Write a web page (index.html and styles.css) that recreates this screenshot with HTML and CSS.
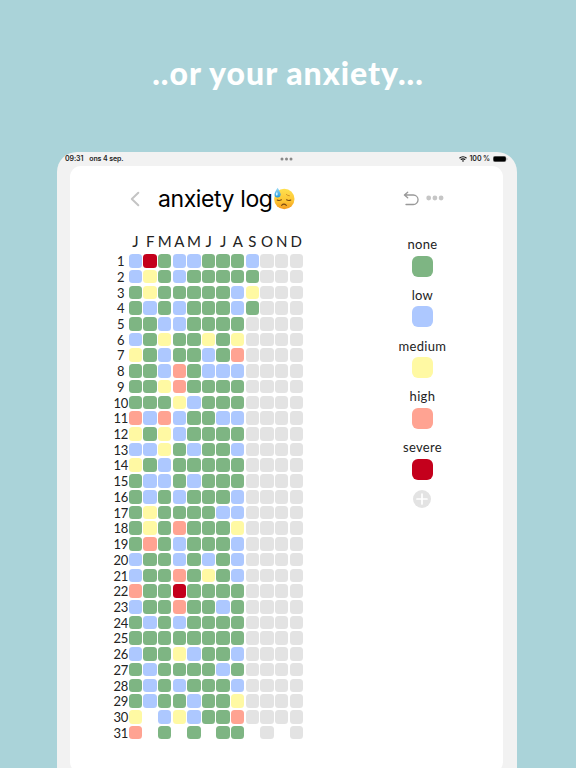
FILE: index.html
```html
<!DOCTYPE html>
<html lang="en">

<head>
  <meta charset="UTF-8" />
  <meta name="viewport" content="width=device-width, initial-scale=1.0" />
  <title>Anxiety log</title>
  <link rel="stylesheet" href="styles.css">
</head>

<body>
  <h1 class="headline">..or your anxiety...</h1>

  <div class="tablet">
    <div class="status">
      <div class="status-left"><span class="time">09:31</span><span class="date">ons 4 sep.</span></div>
      <svg class="status-dots" width="13" height="4" viewBox="0 0 13 4">
        <circle cx="2" cy="2" r="1.5" /><circle cx="6.5" cy="2" r="1.5" /><circle cx="11" cy="2" r="1.5" />
      </svg>
      <div class="status-right">
        <svg width="8" height="6" viewBox="0 0 8 6" fill="none" stroke="#111" stroke-width="1.2">
          <path d="M.5 2.2a5 5 0 0 1 7 0M1.8 3.7a3.1 3.1 0 0 1 4.4 0" />
          <path d="M2.9 4.7a1.6 1.6 0 0 1 2.2 0L4 5.9z" fill="#111" stroke="none" />
        </svg>
        <span class="percent">100 %</span>
        <svg width="15" height="6" viewBox="0 0 15 6">
          <rect x=".2" y=".2" width="12.8" height="5.6" rx="1.7" fill="#000" stroke="#888" stroke-width=".4" />
          <path d="M13.7 2v2q.8-.3.8-1t-.8-1z" fill="#888" />
        </svg>
      </div>
    </div>

    <div class="screen">
      <div class="topbar">
        <svg class="back" width="10" height="16" viewBox="0 0 10 16">
          <path d="M8.3 1.8 1.8 8l6.500 6.200" />
        </svg>
        <h2 class="title">anxiety log</h2>
        <svg class="emoji" width="22" height="23" viewBox="0 0 22 23">
          <defs>
            <linearGradient id="face" x1="0" y1="0" x2="0" y2="1">
              <stop offset="0" stop-color="#ffe04f" />
              <stop offset=".6" stop-color="#fdc533" />
              <stop offset="1" stop-color="#f39a20" />
            </linearGradient>
            <linearGradient id="drop" x1="0" y1="0" x2="0" y2="1">
              <stop offset="0" stop-color="#9fdcf6" />
              <stop offset="1" stop-color="#1f9be0" />
            </linearGradient>
          </defs>
          <circle cx="11.300" cy="12" r="10.200" fill="url(#face)" />
          <path d="M4.200 13q2 1 4.200-.2M13.600 12.800q2 1.200 4.200.2M8.600 18.300q2.200-2.200 4.800 0" fill="none" stroke="#7a4a12" stroke-width="1.100" stroke-linecap="round" />
          <path d="M4.700 8.600q1.700-.1 2.800-1.300M13.400 7.500q1.200 1.200 3 1.300" fill="none" stroke="#c98420" stroke-width=".8" stroke-linecap="round" />
          <path d="M4.600.7q3 4.600 3 6.800a3 3 0 0 1-6.100 0q0-2.200 3.100-6.800z" fill="url(#drop)" />
          <ellipse cx="3.800" cy="7" rx=".9" ry="1.700" fill="#d5f3ff" />
        </svg>
        <svg class="undo" width="17" height="15" viewBox="0 0 17 15">
          <path d="M4.700 1.200 1.400 4l3.300 2.800M1.600 4h8.700a4.700 4.700 0 0 1 0 9.500H3" />
        </svg>
        <svg class="more" width="18" height="6" viewBox="0 0 18 6">
          <circle cx="2.700" cy="3" r="2.400" /><circle cx="8.900" cy="3" r="2.400" /><circle cx="15.100" cy="3" r="2.400" />
        </svg>
      </div>

      <div class="content">
        <div class="year" id="year"></div>

        <div class="legend">
          <span class="label">none</span><i class="swatch none"></i>
          <span class="label">low</span><i class="swatch low"></i>
          <span class="label">medium</span><i class="swatch medium"></i>
          <span class="label">high</span><i class="swatch high"></i>
          <span class="label">severe</span><i class="swatch severe"></i>
          <svg class="add" width="18" height="18" viewBox="0 0 18 18">
            <circle cx="9" cy="9" r="9" fill="#e3e3e3" />
            <path d="M9 4v10M4 9h10" stroke="#fff" stroke-width="1.700" stroke-linecap="round" />
          </svg>
        </div>
      </div>
    </div>
  </div>

  <script src="script.js"></script>
</body>

</html>
```
FILE: styles.css
```css
* {
  box-sizing: border-box;
}

body {
  margin: 0;
  height: 768px;
  overflow: hidden;
  background-color: #aad3d9;
  font-family: Lato, "Open Sans", sans-serif;
  color: #222;
}

.headline {
  margin: 0;
  height: 152px;
  padding-top: 55px;
  text-align: center;
  color: white;
  font-size: 32px;
  line-height: 36px;
  font-weight: 900;
  letter-spacing: 1px;
}

.tablet {
  width: 460px;
  height: 640px;
  margin-left: 57px;
  padding: 0 14px 0 13px;
  border-radius: 20px 20px 0 0;
  background-color: #f2f2f2;
}

.status {
  display: flex;
  align-items: center;
  justify-content: space-between;
  height: 13px;
  margin: 0 -5px 1px;
  font-family: Inter, sans-serif;
  font-size: 7px;
  font-weight: 600;
  line-height: 9px;
}

.status-left,
.status-right {
  display: flex;
  align-items: center;
  width: 120px;
}

.status-right {
  justify-content: flex-end;
  gap: 3px;
}

.time,
.date,
.percent {
  letter-spacing: -0.1px;
}

.date {
  margin-left: 6px;
}

.status-dots {
  fill: #888;
}

.screen {
  height: 607px;
  border-radius: 11px;
  background-color: white;
}

.topbar {
  display: flex;
  align-items: center;
  height: 65px;
  margin-bottom: 1px;
  padding: 0 59px 0 60px;
}

.back {
  fill: none;
  stroke: #c4c4c4;
  stroke-width: 2;
  stroke-linecap: round;
  stroke-linejoin: round;
}

.title {
  margin: 0 0 0 18px;
  font-family: Inter, sans-serif;
  font-size: 23px;
  font-weight: 400;
  letter-spacing: -0.4px;
  color: #000;
}

.emoji {
  margin-left: 1px;
}

.undo {
  margin-left: auto;
  fill: none;
  stroke: #999;
  stroke-width: 1.3;
  stroke-linecap: round;
  stroke-linejoin: round;
}

.more {
  margin: 0 0 2px 6px;
  fill: #c6c6c6;
}

.content {
  display: flex;
  align-items: flex-start;
}

.year {
  display: grid;
  grid-template-columns: 18px repeat(12, 13.4px);
  grid-template-rows: 18px;
  grid-auto-rows: 13.6px;
  column-gap: 1.22px;
  row-gap: 2.13px;
  margin: 2px 0 0 39.6px;
}

.month {
  justify-self: center;
  font-size: 15px;
  line-height: 14px;
}

.day {
  padding-left: 4px;
  text-align: center;
  white-space: nowrap;
  font-size: 13px;
  line-height: 15px;
  letter-spacing: -0.5px;
}

.cell {
  border-radius: 3.5px;
}

.legend {
  display: flex;
  flex-direction: column;
  align-items: center;
  width: 80px;
  margin: 4px 0 0 79.5px;
}

.label {
  font-size: 13px;
  line-height: 17px;
  letter-spacing: 0.3px;
}

.swatch {
  width: 21px;
  height: 21px;
  margin: 2.5px 0 10.3px;
  border-radius: 6px;
}

.none {
  background-color: #7eb583;
}

.low {
  background-color: #adc8ff;
}

.medium {
  background-color: #fff9a3;
}

.high {
  background-color: #ffa392;
}

.severe {
  background-color: #c4001c;
}

.empty {
  background-color: #e3e3e3;
}
```
FILE: script.js
```js
const year = document.getElementById("year");
const levels = { n: "none", l: "low", m: "medium", h: "high", s: "severe", ".": "empty" };

// one string per day of the month, one letter per month, space = no such date
const days = [
  "lsnllnnnl...",
  "lmnlnnnnn...",
  "nmnnnnnlm...",
  "nlnlnnnln...",
  "nnllnnnn....",
  "lnmnnmnm....",
  "mnlnnlnh....",
  "nnlhnlll....",
  "nnmhnnnn....",
  "nnnmlnnn....",
  "hlhlnnll....",
  "mnmlnnnn....",
  "llmnlnnl....",
  "mnlnnnnn....",
  "nllnlnnn....",
  "nlnlnnnl....",
  "nmnnnnll....",
  "nmnhnnnm....",
  "nhnlnnnl....",
  "lnnlnlnl....",
  "lnnhnmnl....",
  "hnnsnnnn....",
  "lnnhnnln....",
  "nlnlnnnn....",
  "nnnnnnnn....",
  "lnnmlnnl....",
  "nlnnnnln....",
  "nlnlnnnl....",
  "nlnnlnnm....",
  "m lmlnnh....",
  "h n n nn . ."
];

function add(className, text) {
  const el = document.createElement("span");
  el.className = className;
  el.textContent = text;
  year.appendChild(el);
}

add("corner", "");
for (const month of "JFMAMJJASOND") {
  add("month", month);
}

days.forEach((row, i) => {
  add("day", i + 1);
  for (const c of row) {
    add(c == " " ? "gap" : "cell " + levels[c], "");
  }
});
```
